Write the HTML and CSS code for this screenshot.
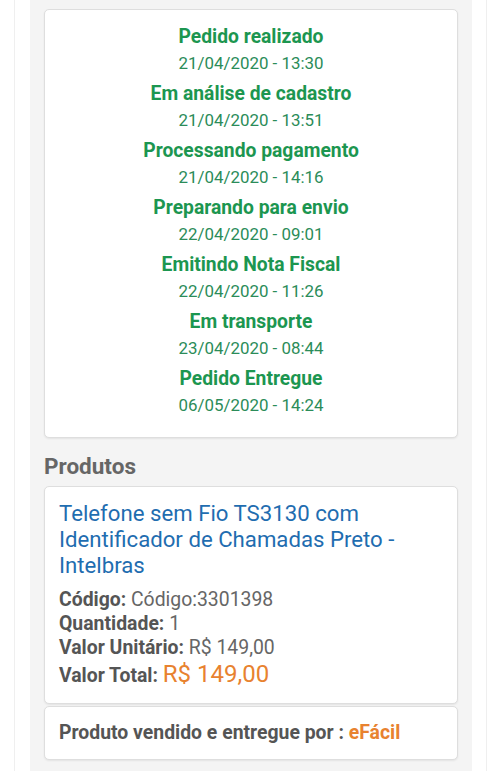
FILE: index.html
```html
<!DOCTYPE html>
<html lang="pt-BR">
<head>
<meta charset="utf-8">
<title>Pedido</title>
<link rel="stylesheet" href="styles.css">
</head>
<body>
<div class="page">
  <div class="panel">
    <div class="card timeline">
      <div class="step"><div class="step-title">Pedido realizado</div><div class="step-date">21/04/2020 - 13:30</div></div>
      <div class="step"><div class="step-title">Em análise de cadastro</div><div class="step-date">21/04/2020 - 13:51</div></div>
      <div class="step"><div class="step-title">Processando pagamento</div><div class="step-date">21/04/2020 - 14:16</div></div>
      <div class="step"><div class="step-title">Preparando para envio</div><div class="step-date">22/04/2020 - 09:01</div></div>
      <div class="step"><div class="step-title">Emitindo Nota Fiscal</div><div class="step-date">22/04/2020 - 11:26</div></div>
      <div class="step"><div class="step-title">Em transporte</div><div class="step-date">23/04/2020 - 08:44</div></div>
      <div class="step"><div class="step-title">Pedido Entregue</div><div class="step-date">06/05/2020 - 14:24</div></div>
    </div>
    <h2 class="section-title">Produtos</h2>
    <div class="card product">
      <div class="product-name">Telefone sem Fio TS3130 com Identificador de Chamadas Preto - Intelbras</div>
      <div class="details">
        <div class="row"><b>Código:</b> Código:3301398</div>
        <div class="row"><b>Quantidade:</b> 1</div>
        <div class="row"><b>Valor Unitário:</b> R$ 149,00</div>
        <div class="row total"><b>Valor Total:</b> <span class="price">R$ 149,00</span></div>
      </div>
    </div>
    <div class="card seller">
      <b>Produto vendido e entregue por :</b> <span class="seller-name">eFácil</span>
    </div>
  </div>
</div>
</body>
</html>
```
FILE: styles.css
```css
html, body {
  margin: 0;
  padding: 0;
  background: #ffffff;
}
body {
  font-family: Roboto, "Liberation Sans", Arial, sans-serif;
  color: #555555;
}
.page {
  margin: 0 13px 0 14px;
  border-left: 1px solid #efefef;
  border-right: 1px solid #efefef;
  padding: 0 14px 0 15px;
  min-height: 771px;
}
.panel {
  background: #f4f4f4;
  padding: 9px 14px 12px 14px;
  min-height: 750px;
}
.card {
  background: #ffffff;
  border: 1px solid #dedede;
  border-radius: 5px;
  box-shadow: 0 1px 2px rgba(0, 0, 0, 0.07);
}
.timeline {
  padding: 14px 10px 14px;
  text-align: center;
}
.step {
  margin-bottom: 5px;
}
.step-title {
  font-size: 19.3px;
  font-weight: 700;
  line-height: 26px;
  color: #1c9650;
}
.step-date {
  font-size: 16.9px;
  line-height: 26px;
  color: #2b8c59;
}
.section-title {
  margin: 14px 0 6px;
  font-size: 22.5px;
  line-height: 28px;
  font-weight: 700;
  color: #666666;
}
.product {
  padding: 13px 14px 13px;
}
.product-name {
  font-size: 22.2px;
  line-height: 26px;
  color: #1f6db0;
}
.details {
  margin-top: 10px;
  font-size: 19.4px;
  line-height: 24px;
  color: #666666;
}
.details b {
  color: #555555;
}
.row.total {
  line-height: 28px;
}
.price {
  font-size: 24px;
  color: #e8822f;
}
.seller {
  margin-top: 2px;
  padding: 14px 14px 14px;
  font-size: 19.4px;
  line-height: 24px;
  color: #555555;
}
.seller-name {
  font-weight: 700;
  color: #e8822f;
}
```
